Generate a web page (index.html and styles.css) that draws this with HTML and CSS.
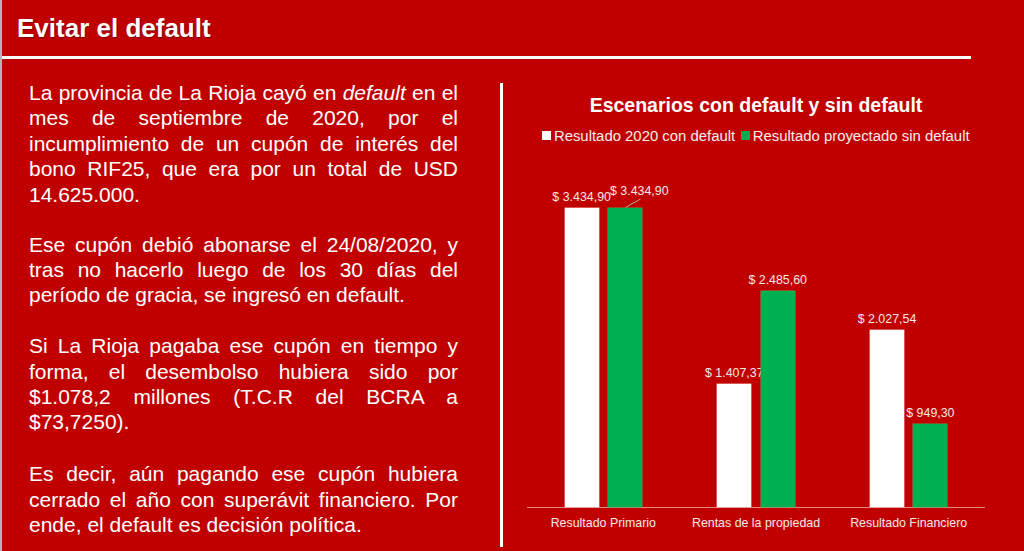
FILE: index.html
```
<!DOCTYPE html>
<html lang="es">
<head>
<meta charset="utf-8">
<title>Evitar el default</title>
<link rel="stylesheet" href="styles.css">
</head>
<body>
<header class="header">
  <h1 class="title">Evitar el default</h1>
  <div class="rule"></div>
</header>
<main class="content">
  <section class="text">
    <p class="para para-1">La provincia de La Rioja cayó en <em>default</em> en el mes de septiembre de 2020, por el incumplimiento de un cupón de interés del bono RIF25, que era por un total de USD 14.625.000.</p>
    <p class="para para-2">Ese cupón debió abonarse el 24/08/2020, y tras no hacerlo luego de los 30 días del período de gracia, se ingresó en default.</p>
    <p class="para para-3">Si La Rioja pagaba ese cupón en tiempo y forma, el desembolso hubiera sido por $1.078,2 millones (T.C.R del BCRA a $73,7250).</p>
    <p class="para">Es decir, aún pagando ese cupón hubiera cerrado el año con superávit financiero. Por ende, el default es decisión política.</p>
  </section>
  <div class="divider"></div>
  <section class="chart">
    <h2 class="chart-title">Escenarios con default y sin default</h2>
    <div class="legend">
      <span class="swatch swatch-white"></span><span class="legend-text">Resultado 2020 con default</span>
      <span class="swatch swatch-green"></span><span class="legend-text">Resultado proyectado sin default</span>
    </div>
    <div class="plot">
      <div class="group">
        <div class="bar-col"><span class="val">$ 3.434,90</span><div class="bar bar-white" style="height:299.2px"></div></div>
        <div class="bar-col"><div class="bar bar-green" style="height:299.2px"><span class="val val-leader">$ 3.434,90</span><svg class="leader" width="16" height="10" viewBox="0 0 16 10"><line x1="0.5" y1="9.5" x2="15.5" y2="1" stroke="#a8a8a8" stroke-width="1"/></svg></div></div>
      </div>
      <div class="group">
        <div class="bar-col"><span class="val">$ 1.407,37</span><div class="bar bar-white" style="height:122.6px"></div></div>
        <div class="bar-col"><span class="val">$ 2.485,60</span><div class="bar bar-green" style="height:216.5px"></div></div>
      </div>
      <div class="group">
        <div class="bar-col"><span class="val">$ 2.027,54</span><div class="bar bar-white" style="height:176.6px"></div></div>
        <div class="bar-col"><span class="val">$ 949,30</span><div class="bar bar-green" style="height:82.7px"></div></div>
      </div>
    </div>
    <div class="cats">
      <span class="cat">Resultado Primario</span>
      <span class="cat">Rentas de la propiedad</span>
      <span class="cat">Resultado Financiero</span>
    </div>
  </section>
</main>
</body>
</html>
```
FILE: styles.css
```
html {
  background: #c00000;
}
body {
  margin: 0;
  width: 1022px;
  height: 551px;
  overflow: hidden;
  background: #c00000;
  border-left: 2px solid #b4b4b4;
  color: #ffffff;
  font-family: "Liberation Sans", Arial, sans-serif;
}
.header {
  padding-top: 13px;
}
.title {
  margin: 0 0 13px 15px;
  font-size: 26px;
  line-height: 30px;
  font-weight: bold;
  text-shadow: 1px 1px 1px rgba(60, 0, 0, 0.55);
}
.rule {
  width: 969px;
  height: 3px;
  background: #ffffff;
}
.content {
  display: flex;
  align-items: flex-start;
}
.text {
  width: 429px;
  margin-left: 27px;
  padding-top: 21px;
  font-size: 21px;
  line-height: 25.4px;
  text-align: justify;
}
.para {
  margin: 0;
}
.para-1 {
  margin-bottom: 24.5px;
}
.para-2 {
  margin-bottom: 25.5px;
}
.para-3 {
  margin-bottom: 26.5px;
}
.divider {
  width: 3px;
  height: 464px;
  margin-left: 42px;
  margin-top: 23.7px;
  background: #ffffff;
}
.chart {
  flex: 1;
  display: flex;
  flex-direction: column;
  align-items: center;
  padding-right: 15px;
}
.chart-title {
  margin: 33.5px 0 0;
  font-size: 19.5px;
  line-height: 24px;
  font-weight: bold;
}
.legend {
  display: flex;
  align-items: center;
  margin-top: 10px;
  height: 18px;
  font-size: 14.9px;
  line-height: 18px;
  color: #f6eded;
}
.swatch {
  width: 8.5px;
  height: 9px;
  margin-right: 3px;
}
.swatch-white {
  background: #ffffff;
}
.swatch-green {
  background: #00b050;
  margin-left: 6px;
}
.plot {
  display: flex;
  width: 458px;
  height: 362.5px;
  border-bottom: 1px solid #dc8a8a;
}
.group {
  flex: 1;
  display: flex;
  justify-content: center;
  align-items: flex-end;
  gap: 9.4px;
}
.bar-col {
  width: 34px;
  display: flex;
  flex-direction: column;
  align-items: center;
  justify-content: flex-end;
}
.val {
  white-space: nowrap;
  font-size: 12.4px;
  line-height: 14px;
  margin-bottom: 4px;
  color: #f4e8e8;
}
.bar {
  width: 34px;
}
.bar-white {
  background: #ffffff;
  box-shadow: 0 0 0 0.5px #f0b0b0;
}
.bar-green {
  position: relative;
  background: #00b050;
  box-shadow: 0 0 0 0.5px #58a050;
}
.val-leader {
  position: absolute;
  left: 2px;
  top: -24px;
}
.leader {
  position: absolute;
  left: 17px;
  top: -9.5px;
}
.cats {
  display: flex;
  width: 458px;
  margin-top: 8.2px;
  font-size: 12.4px;
  line-height: 14px;
  color: #f4e8e8;
}
.cat {
  flex: 1;
  text-align: center;
}
```
